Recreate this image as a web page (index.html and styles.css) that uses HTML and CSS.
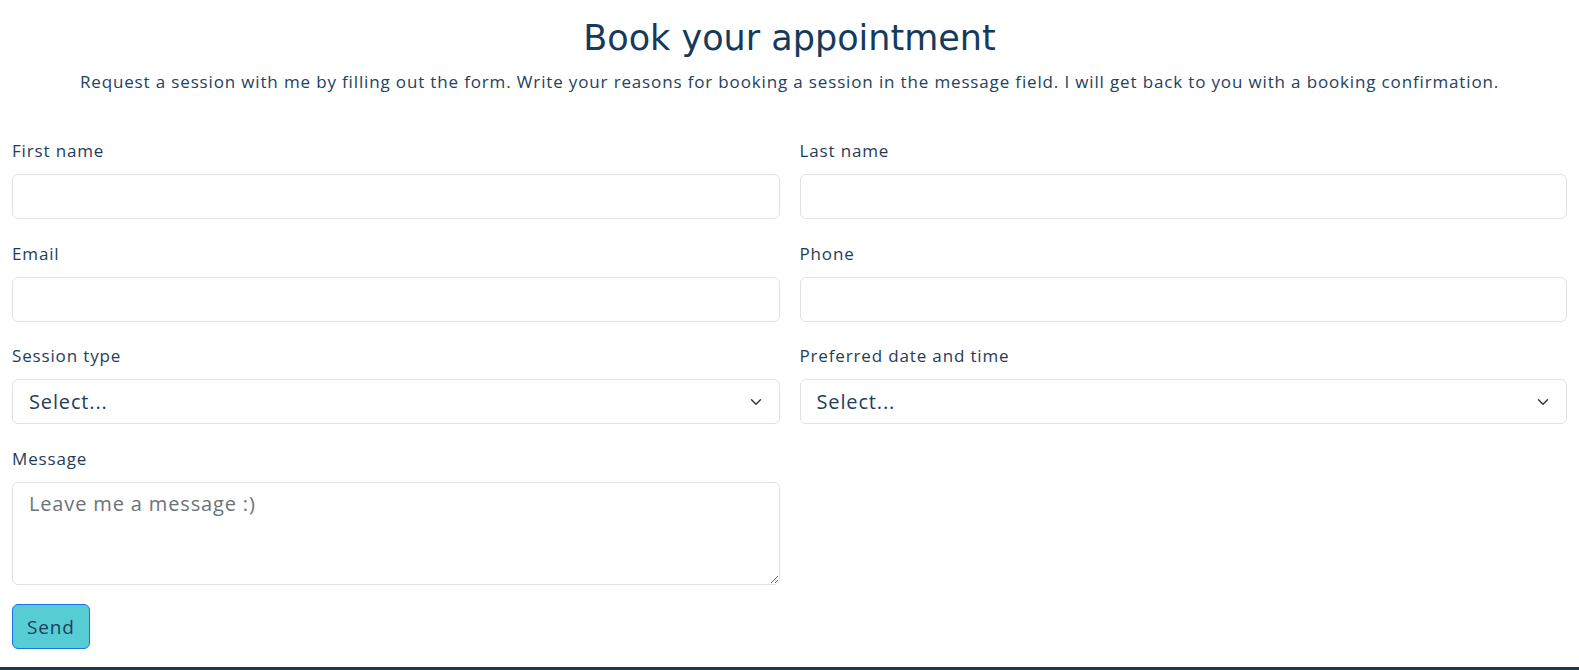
FILE: index.html
```html
<!DOCTYPE html>
<html lang="en">
<head>
<meta charset="utf-8">
<title>Book your appointment</title>
<link rel="stylesheet" href="styles.css">
</head>
<body>
<main class="page">
  <header class="intro">
    <h1 class="title">Book your appointment</h1>
    <p class="lead">Request a session with me by filling out the form. Write your reasons for booking a session in the message field. I will get back to you with a booking confirmation.</p>
  </header>
  <form class="form">
    <div class="field">
      <label class="label" for="fn">First name</label>
      <input class="control" id="fn" type="text">
    </div>
    <div class="field">
      <label class="label" for="ln">Last name</label>
      <input class="control" id="ln" type="text">
    </div>
    <div class="field">
      <label class="label" for="em">Email</label>
      <input class="control" id="em" type="email">
    </div>
    <div class="field">
      <label class="label" for="ph">Phone</label>
      <input class="control" id="ph" type="tel">
    </div>
    <div class="field">
      <label class="label" for="st">Session type</label>
      <select class="control select" id="st"><option>Select...</option></select>
    </div>
    <div class="field">
      <label class="label" for="dt">Preferred date and time</label>
      <select class="control select" id="dt"><option>Select...</option></select>
    </div>
    <div class="field">
      <label class="label" for="msg">Message</label>
      <textarea class="control textarea" id="msg" placeholder="Leave me a message :)"></textarea>
    </div>
    <div class="actions">
      <button class="send" type="button">Send</button>
    </div>
  </form>
</main>
<footer class="footer"></footer>
</body>
</html>
```
FILE: styles.css
```css
* { box-sizing: border-box; }
html, body { margin: 0; padding: 0; }
body {
  font-family: "Open Sans", "Noto Sans", sans-serif;
  letter-spacing: 0.85px;
  color: #1b3a57;
  background: #fff;
  height: 670px;
  overflow: hidden;
  display: flex;
  flex-direction: column;
}
.page {
  flex: 1;
  padding: 18px 12px 0;
}
.intro { text-align: center; }
.title {
  margin: 0;
  font-family: "DejaVu Sans", sans-serif;
  font-weight: 400;
  font-size: 35px;
  line-height: 41px;
  letter-spacing: 0;
  color: #163a5c;
}
.lead {
  margin: 10px 0 0;
  font-size: 17px;
  line-height: 25px;
  color: #24415e;
}
.form {
  margin-top: 44px;
  display: grid;
  grid-template-columns: 1fr 1fr;
  column-gap: 20px;
  row-gap: 21.6px;
}
.field { display: flex; flex-direction: column; }
.label {
  font-size: 17px;
  line-height: 25px;
  margin-bottom: 11px;
  color: #1f3d5a;
}
.control {
  display: block;
  width: 100%;
  height: 45px;
  border: 1px solid #dee2e6;
  border-radius: 6px;
  background: #fff;
  font-family: inherit;
  letter-spacing: inherit;
  font-size: 20px;
  color: #1f3d5a;
  padding: 0 16px;
  outline: none;
}
.select {
  appearance: none;
  -webkit-appearance: none;
  background-image: url("data:image/svg+xml,%3csvg xmlns='http://www.w3.org/2000/svg' viewBox='0 0 16 16'%3e%3cpath fill='none' stroke='%23343a40' stroke-linecap='round' stroke-linejoin='round' stroke-width='2' d='m2 5 6 6 6-6'/%3e%3c/svg%3e");
  background-repeat: no-repeat;
  background-position: right 15px center;
  background-size: 16px 12px;
}
.textarea {
  height: 103px;
  padding: 7px 16px;
  resize: vertical;
  line-height: 27px;
}
.textarea::placeholder { color: #6b737b; }
.actions { grid-column: 1 / 2; margin-top: -2px; }
.send {
  height: 45px;
  padding: 0 14px;
  font-family: inherit;
  letter-spacing: inherit;
  font-size: 19px;
  color: #1f3d5a;
  background: #56cdd4;
  border: 1px solid #1a73e8;
  border-radius: 6px;
  cursor: pointer;
}
.footer {
  height: 3px;
  background: #1a3a52;
}
```
